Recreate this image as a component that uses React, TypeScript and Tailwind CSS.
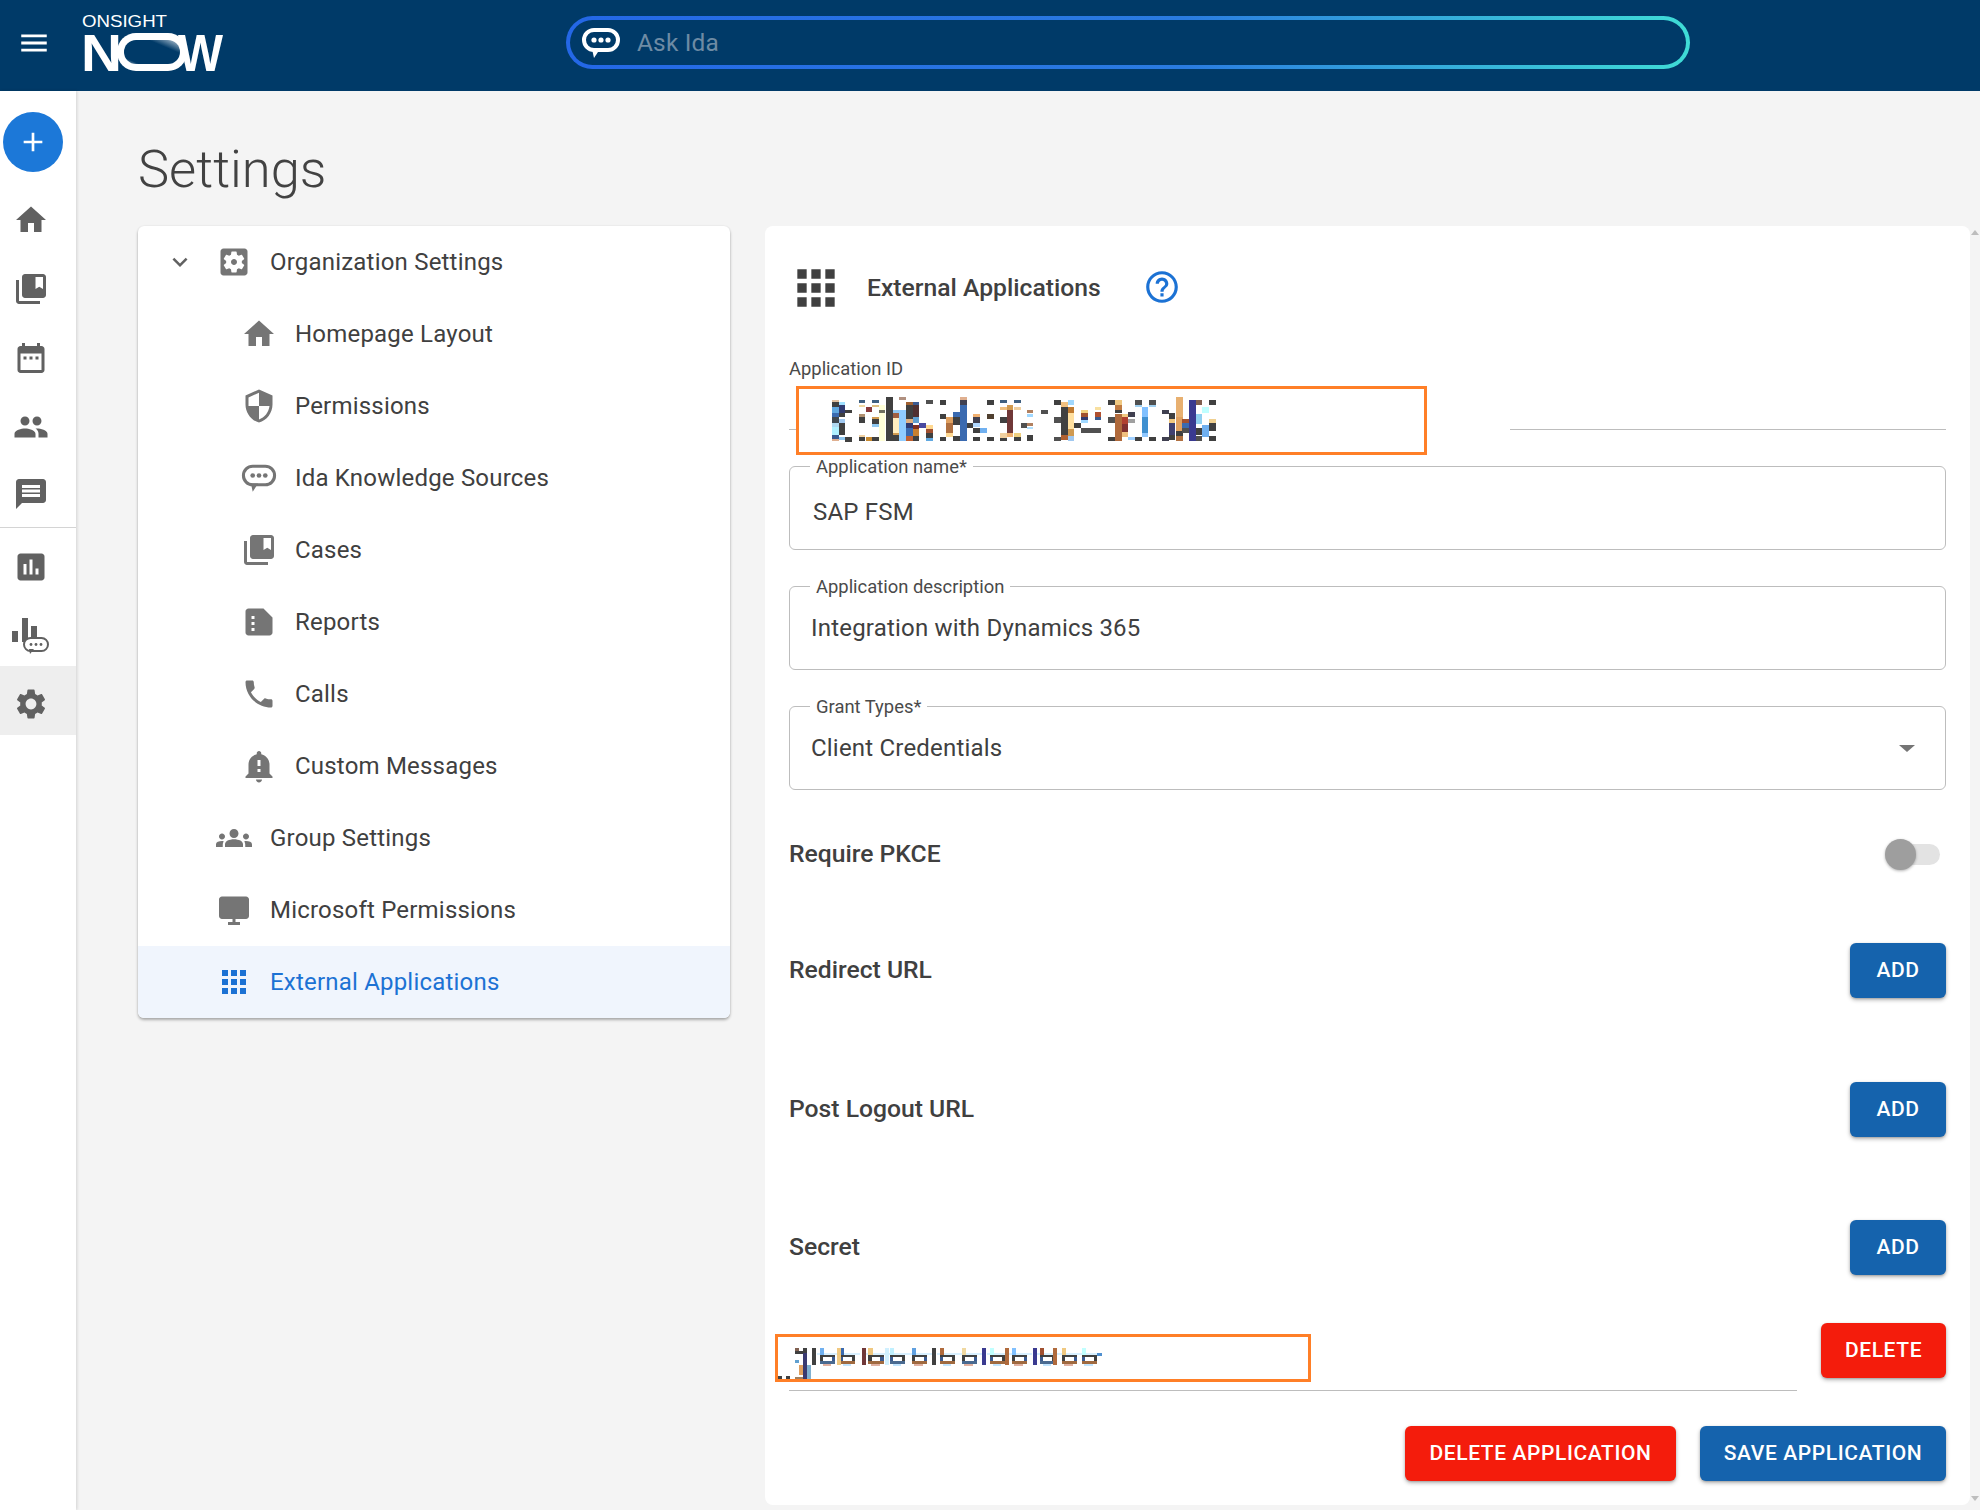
import React from "react";

type R = [number, number, number, number, string];
const D = "#404040", G = "#505050", N = "#303a70", B = "#3a6ab0";

const idA: R[] = [
  [18,24,20,6,"#e0c0a0"],[18,30,20,14,D],[18,44,20,20,"#60a8e0"],[18,64,20,10,B],[18,74,20,20,"#404850"],[18,94,20,10,"#b0d8f0"],[18,104,20,26,"#b0f0ff"],[18,130,20,10,"#3a5a90"],[18,140,20,8,"#e0b090"],
  [38,30,20,10,"#a0e0ff"],[38,40,20,24,N],[38,64,20,10,D],[38,80,20,14,"#a0c8f0"],[38,94,20,36,D],[38,135,20,8,"#90c8f0"],
  [58,54,20,10,D],[58,135,20,14,D],
  [98,24,20,10,"#406080"],[98,38,20,8,"#f0d8a0"],[98,66,20,10,"#b09070"],[98,76,20,18,D],[98,130,20,6,"#f0d0a0"],[98,136,20,12,D],
  [120,44,18,16,"#8a3a3a"],[120,134,18,14,"#c88a30"],
  [138,24,20,10,"#406080"],[138,38,20,8,"#e0c080"],[138,74,20,8,"#d09a50"],[138,82,20,14,D],[138,96,20,10,"#90c8f0"],[138,134,20,14,D],
  [158,38,20,110,"#ffffd8"],[158,54,20,10,"#707060"],
  [180,14,20,134,D],
  [200,54,20,10,"#90c8f0"],[200,64,20,14,"#a06040"],[200,78,20,44,"#ffeec0"],[200,122,20,8,"#d09a50"],[200,130,20,18,D],
  [220,14,20,10,"#b09080"],[220,54,20,94,"#90ccff"],
  [240,30,20,10,"#a06030"],[240,40,20,40,D],[240,80,20,14,"#e0b080"],[240,94,20,14,N],[240,108,20,24,B],[240,132,20,16,"#c06030"],
  [260,30,20,10,"#3a5a90"],[260,40,20,34,"#503030"],[260,74,20,20,"#60a0d0"],[260,98,20,14,"#803020"],[260,112,20,20,"#c88030"],[260,132,20,14,D],
  [280,94,20,14,"#4a4aa0"],
  [300,24,20,12,G],[300,100,20,10,"#ffd890"],[300,110,20,14,"#a05030"],[300,124,20,14,D],[300,138,20,8,"#60a8e0"],
  [342,24,18,14,D],[342,66,18,16,D],[342,134,18,14,D],
  [360,74,20,20,"#e0a060"],[360,94,20,30,"#b07040"],[360,124,20,10,"#ffd890"],
  [380,60,22,14,B],[380,74,22,26,D],[380,132,22,16,D],
  [402,14,22,10,"#e0b090"],[402,24,22,16,"#404050"],[402,40,22,108,B],
  [424,94,18,14,D],
  [442,66,20,8,"#f0b070"],[442,74,20,20,"#404050"],[442,94,20,10,"#b0d8ff"],[442,108,20,14,D],[442,134,20,14,D],
  [462,108,20,14,"#70b0f0"],
  [482,24,22,14,D],[482,66,22,14,"#504030"],[482,134,22,14,D],
  [522,24,20,8,"#406080"],[522,44,20,10,"#f0c080"],[522,74,20,20,D],[522,124,20,14,"#f0d0a0"],[522,138,20,10,D],
  [542,38,20,16,"#d09a50"],[542,54,20,70,"#703838"],[542,124,20,10,"#f0b070"],
  [564,24,20,8,"#406080"],[564,44,20,10,"#f0d0a0"],[564,122,20,14,"#f0d080"],[564,136,20,12,D],
];
const idB: R[] = [
  [20,54,20,8,"#b08060"],[20,66,20,8,"#a0d8ff"],[62,54,22,12,G],[2,94,20,14,G],[20,94,20,8,"#b08060"],[20,104,20,8,"#b0e0ff"],[20,130,20,18,D],
  [102,24,20,14,D],[102,76,20,16,G],[102,134,20,14,G],
  [122,30,22,14,"#f0c080"],[122,44,22,86,D],[122,130,22,14,"#b06030"],
  [144,24,18,14,"#a0d8ff"],[144,44,18,20,"#c07a30"],[144,64,18,48,"#ffe0a0"],[144,112,18,20,"#d09a50"],[144,132,18,16,"#a0c8f0"],
  [162,94,20,14,D],
  [183,54,20,8,"#f0d080"],[183,62,20,12,"#a05030"],[183,74,20,10,N],[183,84,20,10,"#a0d8ff"],[183,108,60,14,G],
  [224,44,20,10,"#f8e0a0"],[224,60,20,16,"#b05030"],[224,76,20,8,"#3a5a90"],
  [264,24,20,14,D],[264,76,20,16,G],[264,134,20,14,D],
  [285,24,20,14,"#f0c880"],[285,38,20,16,"#c07a40"],[285,54,20,10,D],[285,66,20,82,"#b06a3c"],
  [305,66,20,10,"#f0c880"],[305,76,20,20,"#b04030"],[305,96,20,24,"#803030"],[305,120,20,14,"#f0c080"],
  [325,60,20,16,"#404050"],[325,80,20,14,"#a0a0a0"],[325,134,20,10,"#a0d0ff"],
  [345,24,20,14,G],[345,38,20,8,"#a0d0f0"],[345,134,20,14,D],
  [365,44,20,30,"#80c0ff"],[365,74,20,48,"#4090d0"],[365,122,20,12,"#90c8ff"],
  [387,24,20,14,G],[387,38,20,8,"#a0d0f0"],[387,134,20,14,D],
  [426,54,20,12,"#404050"],[426,134,20,14,"#404050"],
  [446,64,20,16,D],[446,80,20,14,"#f0c880"],[446,94,20,36,"#404070"],[446,130,20,14,D],
  [468,14,20,60,"#e8b070"],[468,74,20,44,"#e0a060"],[468,118,20,14,D],[468,132,20,14,"#b07040"],
  [487,80,20,14,"#a05030"],[487,94,20,14,B],[487,108,20,14,G],
  [507,24,20,124,"#3a3a90"],
  [527,24,20,14,"#806050"],[527,66,20,30,"#90d0f0"],[527,108,20,20,D],[527,132,20,14,G],
  [547,44,20,20,"#c0ffff"],[547,98,20,36,"#70b0f0"],
  [567,24,20,14,D],[567,80,20,14,"#f0d090"],[567,94,20,24,D],[567,132,20,14,D],
];

const secretStarts = [135,195,280,345,410,495,560,645,710,795,860,920];
const secretTops = ["#70b0f0","#3a6ab0","#f0c880","#c0f0ff","#60a0e0","#b06a3c","#f0d8a0","#c0ffff","#80c0ff","#a05030","#f0c880","#c0ffff"];
const stems: [number, string][] = [[110,D],[260,"#703838"],[470,D],[620,"#3a3a90"],[775,"#3a3a90"],[185,"#f0c880"],[330,"#d0f0ff"],[690,"#b06a3c"],[835,"#b06a3c"]];

function Mosaic() {
  return (
    <svg width="394" height="56" viewBox="0 0 1182 168" shapeRendering="crispEdges">
      {idA.map((r, i) => <rect key={i} x={r[0]} y={r[1]} width={r[2]} height={r[3]} fill={r[4]} />)}
      <g transform="translate(582 0)">
        {idB.map((r, i) => <rect key={i} x={r[0]} y={r[1]} width={r[2]} height={r[3]} fill={r[4]} />)}
      </g>
    </svg>
  );
}

function SecretMosaic() {
  return (
    <svg width="340" height="45" viewBox="0 0 1020 135" shapeRendering="crispEdges">
      <rect x="60" y="24" width="12" height="8" fill="#806050" />
      <rect x="60" y="34" width="24" height="8" fill={D} />
      <rect x="60" y="60" width="12" height="8" fill="#60a0d0" />
      <rect x="72" y="74" width="12" height="30" fill="#e0a060" />
      <rect x="84" y="24" width="12" height="16" fill={D} />
      <rect x="84" y="40" width="12" height="78" fill="#3a3a70" />
      <rect x="96" y="76" width="12" height="40" fill="#80b0d0" />
      <rect x="8" y="108" width="12" height="8" fill={D} />
      <rect x="32" y="108" width="12" height="8" fill={D} />
      <rect x="60" y="110" width="24" height="8" fill="#a08060" />
      {secretStarts.map((x, i) => (
        <g key={x}>
          <rect x={x - 10} y="40" width="70" height="6" fill="#d8f0ff" />
          <rect x={x} y="24" width="13" height="20" fill={secretTops[i]} />
          <rect x={x} y="44" width="46" height="8" fill={D} />
          <rect x={x} y="52" width="10" height="12" fill={i % 2 ? "#3a5a90" : D} />
          <rect x={x + 36} y="52" width="10" height="12" fill={i % 2 ? D : "#3a5a90"} />
          <rect x={x} y="64" width="46" height="7" fill={i % 3 ? "#a06a40" : "#4a6a90"} />
          <rect x={x + 8} y="71" width="26" height="6" fill={i % 2 ? "#c0e4ff" : "#e0b0a0"} />
        </g>
      ))}
      {stems.map(([x, c]) => <rect key={x} x={x} y="24" width="12" height="50" fill={c} />)}
      <rect x="965" y="40" width="16" height="8" fill="#5090d0" />
    </svg>
  );
}

function Ic({ d, size = 30, className = "" }: { d: string; size?: number; className?: string }) {
  return (
    <svg width={size} height={size} viewBox="0 0 24 24" fill="currentColor" className={className}>
      <path d={d} fillRule="evenodd" />
    </svg>
  );
}

const P = {
  home: "M10 20v-6h4v6h5v-8h3L12 3 2 12h3v8z",
  cases: "M4 6H2v14c0 1.1.9 2 2 2h14v-2H4V6zm16-4H8c-1.1 0-2 .9-2 2v12c0 1.1.9 2 2 2h12c1.1 0 2-.9 2-2V4c0-1.1-.9-2-2-2zm0 10l-2.5-1.5L15 12V4h5v8z",
  calendar: "M19 4h-1V2h-2v2H8V2H6v2H5c-1.1 0-2 .9-2 2v14c0 1.1.9 2 2 2h14c1.1 0 2-.9 2-2V6c0-1.1-.9-2-2-2zm0 16H5V9h14v11zM7 11h2v2H7zm4 0h2v2h-2zm4 0h2v2h-2z",
  people: "M16 11c1.66 0 2.99-1.34 2.99-3S17.66 5 16 5c-1.66 0-3 1.34-3 3s1.34 3 3 3zm-8 0c1.66 0 2.99-1.34 2.99-3S9.66 5 8 5C6.34 5 5 6.34 5 8s1.34 3 3 3zm0 2c-2.33 0-7 1.17-7 3.5V19h14v-2.5c0-2.33-4.67-3.5-7-3.5zm8 0c-.29 0-.62.02-.97.05 1.16.84 1.97 1.97 1.97 3.45V19h6v-2.5c0-2.33-4.67-3.5-7-3.5z",
  message: "M20 2H4c-1.1 0-1.99.9-1.99 2L2 22l4-4h14c1.1 0 2-.9 2-2V4c0-1.1-.9-2-2-2zm-2 12H6v-2h12v2zm0-3H6V9h12v2zm0-3H6V6h12v2z",
  assess: "M19 3H5c-1.1 0-2 .9-2 2v14c0 1.1.9 2 2 2h14c1.1 0 2-.9 2-2V5c0-1.1-.9-2-2-2zM9 17H7v-7h2v7zm4 0h-2V7h2v10zm4 0h-2v-4h2v4z",
  gear: "M19.14 12.94c.04-.3.06-.61.06-.94 0-.32-.02-.64-.07-.94l2.03-1.58c.18-.14.23-.41.12-.61l-1.92-3.32c-.12-.22-.37-.29-.59-.22l-2.39.96c-.5-.38-1.03-.7-1.62-.94l-.36-2.54c-.04-.24-.24-.41-.48-.41h-3.84c-.24 0-.43.17-.47.41l-.36 2.54c-.59.24-1.13.57-1.62.94l-2.39-.96c-.22-.08-.47 0-.59.22L2.74 8.87c-.12.21-.08.47.12.61l2.03 1.58c-.05.3-.09.63-.09.94s.02.64.07.94l-2.03 1.58c-.18.14-.23.41-.12.61l1.92 3.32c.12.22.37.29.59.22l2.39-.96c.5.38 1.03.7 1.62.94l.36 2.54c.05.24.24.41.48.41h3.84c.24 0 .44-.17.47-.41l.36-2.54c.59-.24 1.13-.56 1.62-.94l2.39.96c.22.08.47 0 .59-.22l1.92-3.32c.12-.22.07-.47-.12-.61l-2.01-1.58zM12 15.6c-1.98 0-3.6-1.62-3.6-3.6s1.62-3.6 3.6-3.6 3.6 1.62 3.6 3.6-1.62 3.6-3.6 3.6z",
  orgGear: "M19 3H5c-1.11 0-2 .9-2 2v14c0 1.1.89 2 2 2h14c1.11 0 2-.9 2-2V5c0-1.1-.89-2-2-2zm-1.75 9c0 .23-.02.46-.05.68l1.48 1.16c.13.11.17.3.08.45l-1.4 2.42c-.09.15-.27.21-.43.15l-1.74-.7c-.36.28-.76.51-1.18.69l-.26 1.85c-.03.17-.18.3-.35.3h-2.8c-.17 0-.32-.13-.35-.29l-.26-1.85c-.43-.18-.82-.41-1.18-.69l-1.74.7c-.16.06-.34 0-.43-.15l-1.4-2.42c-.09-.15-.05-.34.08-.45l1.48-1.16c-.03-.23-.05-.46-.05-.69 0-.23.02-.46.05-.68l-1.48-1.16c-.13-.11-.17-.3-.08-.45l1.4-2.42c.09-.15.27-.21.43-.15l1.74.7c.36-.28.76-.51 1.18-.69l.26-1.85c.03-.17.18-.3.35-.3h2.8c.17 0 .32.13.35.29l.26 1.85c.43.18.82.41 1.18.69l1.74-.7c.16-.06.34 0 .43.15l1.4 2.42c.09.15.05.34-.08.45l-1.48 1.16c.03.23.05.46.05.69zM12 10c-1.1 0-2 .9-2 2s.9 2 2 2 2-.9 2-2-.9-2-2-2z",
  shield: "M12 1L3 5v6c0 5.55 3.84 10.74 9 12 5.16-1.26 9-6.45 9-12V5l-9-4zm0 10.99h7c-.53 4.12-3.28 7.79-7 8.94V12H5V6.3l7-3.11v8.8z",
  report: "M5 3h10l6 6v10c0 1.1-.9 2-2 2H5c-1.1 0-2-.9-2-2V5c0-1.1.9-2 2-2zm2 5v2h2V8H7zm0 4v2h2v-2H7zm0 4v2h2v-2H7z",
  phone: "M6.62 10.79c1.44 2.83 3.76 5.14 6.59 6.59l2.2-2.2c.27-.27.67-.36 1.02-.24 1.12.37 2.33.57 3.57.57.55 0 1 .45 1 1V20c0 .55-.45 1-1 1-9.39 0-17-7.61-17-17 0-.55.45-1 1-1h3.5c.55 0 1 .45 1 1 0 1.25.2 2.45.57 3.57.11.35.03.74-.25 1.02l-2.2 2.2z",
  bell: "M12 23c1.1 0 1.99-.89 1.99-1.99h-3.98c0 1.1.89 1.99 1.99 1.99zm7-6v-6c0-3.35-2.36-6.15-5.5-6.83V3.5c0-.83-.67-1.5-1.5-1.5s-1.5.67-1.5 1.5v.67C7.36 4.85 5 7.65 5 11v6l-2 2v1h18v-1l-2-2zm-6-1h-2v-2h2v2zm0-4h-2V8h2v4z",
  groups: "M12 12.75c1.63 0 3.07.39 4.24.9 1.08.48 1.76 1.56 1.76 2.73V18H6v-1.61c0-1.18.68-2.26 1.76-2.73 1.17-.52 2.61-.91 4.24-.91zM4 13c1.1 0 2-.9 2-2s-.9-2-2-2-2 .9-2 2 .9 2 2 2zm1.13 1.1c-.37-.06-.74-.1-1.13-.1-.99 0-1.93.21-2.78.58C.48 14.9 0 15.62 0 16.43V18h4.5v-1.61c0-.83.23-1.61.63-2.29zM20 13c1.1 0 2-.9 2-2s-.9-2-2-2-2 .9-2 2 .9 2 2 2zm4 3.43c0-.81-.48-1.53-1.22-1.85-.85-.37-1.79-.58-2.78-.58-.39 0-.76.04-1.13.1.4.68.63 1.46.63 2.29V18H24v-1.57zM12 6c1.66 0 3 1.34 3 3s-1.34 3-3 3-3-1.34-3-3 1.34-3 3-3z",
  monitor: "M20 3H4c-1.1 0-2 .9-2 2v11c0 1.1.9 2 2 2h7v2H8v2h8v-2h-3v-2h7c1.1 0 2-.9 2-2V5c0-1.1-.9-2-2-2z",
  apps: "M4 8h4V4H4v4zm6 12h4v-4h-4v4zm-6 0h4v-4H4v4zm0-6h4v-4H4v4zm6 0h4v-4h-4v4zm6-10v4h4V4h-4zm-6 4h4V4h-4v4zm6 6h4v-4h-4v4zm0 6h4v-4h-4v4z",
  chevron: "M16.59 8.59L12 13.17 7.41 8.59 6 10l6 6 6-6z",
  help: "M11 18h2v-2h-2v2zm1-16C6.48 2 2 6.48 2 12s4.48 10 10 10 10-4.48 10-10S17.52 2 12 2zm0 18c-4.41 0-8-3.59-8-8s3.59-8 8-8 8 3.59 8 8-3.59 8-8 8zm0-14c-2.21 0-4 1.79-4 4h2c0-1.1.9-2 2-2s2 .9 2 2c0 2-3 1.75-3 5h2c0-2.25 3-2.5 3-5 0-2.21-1.79-4-4-4z",
  plus: "M19 13h-6v6h-2v-6H5v-2h6V5h2v6h6v2z",
  menu: "M3 18h18v-2H3v2zm0-5h18v-2H3v2zm0-7v2h18V6H3z",
};

function ChatPill({ width, weight, color = "currentColor" }: { width: number; weight: number; color?: string }) {
  return (
    <svg width={width} height={width * 0.8} viewBox="0 0 40 32" fill="none">
      <rect x={weight / 2 + 1} y={weight / 2 + 1} width={38 - weight} height={24 - weight} rx={(24 - weight) / 2} stroke={color} strokeWidth={weight} />
      <path d="M11 22h8l-6 9z" fill={color} />
      <circle cx="13" cy="13" r="2.6" fill={color} />
      <circle cx="20" cy="13" r="2.6" fill={color} />
      <circle cx="27" cy="13" r="2.6" fill={color} />
    </svg>
  );
}

function BarsChat() {
  return (
    <svg width="38" height="40" viewBox="0 0 38 40" fill="#616161">
      <rect x="0" y="15" width="6" height="11" />
      <rect x="10" y="2" width="6" height="24" />
      <rect x="19" y="10" width="6" height="11" />
      <rect x="12" y="22" width="24" height="13" rx="6.5" fill="#fff" stroke="#616161" strokeWidth="2" />
      <path d="M17 33h5l-4 5z" />
      <circle cx="19" cy="28.5" r="1.4" />
      <circle cx="24" cy="28.5" r="1.4" />
      <circle cx="29" cy="28.5" r="1.4" />
    </svg>
  );
}

function Logo() {
  return (
    <svg width="146" height="91" viewBox="0 0 146 91" fill="#fff" className="ml-[31px] shrink-0">
      <defs>
        <linearGradient id="hole" x1="0" y1="1" x2="1" y2="0">
          <stop offset="0" stopColor="#b8c8d6" />
          <stop offset="0.14" stopColor="#003a68" />
          <stop offset="0.72" stopColor="#003a68" />
          <stop offset="1" stopColor="#c2d0dc" />
        </linearGradient>
      </defs>
      <text x="0" y="27" fontFamily="'Liberation Sans',sans-serif" fontSize="16.5" textLength="85" lengthAdjust="spacingAndGlyphs">ONSIGHT</text>
      <rect x="35" y="33" width="70" height="38" rx="19" fill="#fff" />
      <rect x="42" y="40" width="56" height="24" rx="12" fill="url(#hole)" />
      <text x="-1" y="71" fontFamily="'Liberation Sans',sans-serif" fontWeight="700" fontSize="52" textLength="41" lengthAdjust="spacingAndGlyphs">N</text>
      <text x="96" y="71" fontFamily="'Liberation Sans',sans-serif" fontWeight="700" fontSize="52" textLength="45" lengthAdjust="spacingAndGlyphs">W</text>
    </svg>
  );
}

const railRows: { h: string; node: React.ReactNode }[] = [
  { h: "h-[69px]", node: <Ic d={P.home} size={36} /> },
  { h: "h-[69px]", node: <Ic d={P.cases} size={36} /> },
  { h: "h-[69px]", node: <Ic d={P.calendar} size={36} /> },
  { h: "h-[69px]", node: <Ic d={P.people} size={36} /> },
  { h: "h-[66px]", node: <Ic d={P.message} size={36} /> },
];

const menu: { label: string; d?: string; level: 1 | 2; chat?: boolean; chevron?: boolean; active?: boolean }[] = [
  { label: "Organization Settings", d: P.orgGear, level: 1, chevron: true },
  { label: "Homepage Layout", d: P.home, level: 2 },
  { label: "Permissions", d: P.shield, level: 2 },
  { label: "Ida Knowledge Sources", level: 2, chat: true },
  { label: "Cases", d: P.cases, level: 2 },
  { label: "Reports", d: P.report, level: 2 },
  { label: "Calls", d: P.phone, level: 2 },
  { label: "Custom Messages", d: P.bell, level: 2 },
  { label: "Group Settings", d: P.groups, level: 1 },
  { label: "Microsoft Permissions", d: P.monitor, level: 1 },
  { label: "External Applications", d: P.apps, level: 1, active: true },
];

function Field({ label, value, indent = "pl-[21px]", arrow, valueClass = "pb-[1px]" }: { label: string; value: string; indent?: string; arrow?: boolean; valueClass?: string }) {
  return (
    <div className={`relative flex h-[84px] items-center rounded-[6px] border border-[#bdbdbd] ${indent} pr-[30px]`}>
      <span className="absolute -top-[11px] left-[20px] bg-white px-[6px] text-[18.4px] leading-[22px] text-[#4a4a4a]">{label}</span>
      <span className={`flex-1 text-[24px] tracking-[0.2px] text-[#404040] ${valueClass}`}>{value}</span>
      {arrow && <span className="h-0 w-0 border-x-[8px] border-t-[7px] border-x-transparent border-t-[#757575]" />}
    </div>
  );
}

function Btn({ children, red, className = "" }: { children: React.ReactNode; red?: boolean; className?: string }) {
  return (
    <button className={`flex h-[55px] items-center justify-center rounded-[6px] text-[21px] font-medium tracking-[0.6px] text-white shadow-[0_2px_4px_rgba(0,0,0,0.28),0_1px_2px_rgba(0,0,0,0.16)] ${red ? "bg-[#f41c0c]" : "bg-[#1563ad]"} ${className}`}>
      {children}
    </button>
  );
}

function Row({ label, className = "" }: { label: string; className?: string }) {
  return (
    <div className={`flex h-[55px] items-center justify-between ${className}`}>
      <span className="pb-[2px] text-[24.7px] font-medium text-[#404040]">{label}</span>
      <Btn className="w-[96px]">ADD</Btn>
    </div>
  );
}

export default function App() {
  return (
    <div className="flex h-[1510px] w-[1980px] flex-col overflow-hidden bg-[#f4f4f4] font-[Roboto,sans-serif] text-[#404040]">
      <header className="flex h-[91px] shrink-0 items-start bg-[#003a68]">
        <Ic d={P.menu} size={34} className="ml-[17px] mt-[26px] shrink-0 text-white" />
        <Logo />
        <div className="ml-[338px] mt-[16px] h-[53px] w-[1124px] rounded-full bg-[linear-gradient(90deg,#2467e6_0%,#2a7be0_55%,#3fdcd6_100%)] p-[4px]">
          <div className="flex h-full items-center rounded-full bg-[#003a68] pl-[11px]">
            <ChatPill width={40} weight={4} color="#fff" />
            <span className="ml-[16px] pt-[2px] text-[24.4px] tracking-[0.2px] text-[#6e8ba4]">Ask Ida</span>
          </div>
        </div>
      </header>

      <div className="flex min-h-0 flex-1">
        <aside className="z-10 flex w-[76px] shrink-0 flex-col bg-white text-[#616161] shadow-[1px_0_3px_rgba(0,0,0,0.14)]">
          <button className="mx-[3px] mt-[21px] flex h-[60px] w-[60px] shrink-0 items-center justify-center rounded-full bg-[#1c78d8] text-white">
            <Ic d={P.plus} size={32} />
          </button>
          <div className="mt-[13px]">
            {railRows.map((r, i) => (
              <div key={i} className={`flex items-center pl-[13px] ${r.h}`}>{r.node}</div>
            ))}
          </div>
          <div className="h-px bg-[#d4d4d4]" />
          <div className="flex h-[78px] items-center pl-[13px]"><Ic d={P.assess} size={36} /></div>
          <div className="flex h-[60px] items-center pl-[12px]"><BarsChat /></div>
          <div className="flex h-[69px] items-center bg-[#eeeeee] pl-[13px] pt-[7px]"><Ic d={P.gear} size={36} /></div>
        </aside>

        <main className="relative flex min-w-0 flex-1 flex-col pl-[62px] pr-[10px]">
          <h1 className="h-[135px] pt-[44px] text-[52.5px] font-light leading-[68px] text-[#424242]">Settings</h1>
          <div className="flex items-start gap-[35px]">
            <nav className="w-[592px] shrink-0 overflow-hidden rounded-[6px] bg-white shadow-[0_2px_3px_rgba(0,0,0,0.3),0_0_2px_rgba(0,0,0,0.08)]">
              {menu.map((m) => (
                <div key={m.label} className={`flex h-[72px] items-center ${m.active ? "bg-[#f0f5fd] text-[#1c72d4]" : ""} ${m.level === 2 ? "pl-[103px]" : m.chevron ? "pl-[27px]" : "pl-[78px]"}`}>
                  {m.chevron && <Ic d={P.chevron} size={30} className="mr-[21px] shrink-0 text-[#616161]" />}
                  <span className={`flex w-[36px] shrink-0 items-center justify-center ${m.active ? "text-[#1c72d4]" : "text-[#757575]"}`}>
                    {m.chat ? <ChatPill width={38} weight={3.4} /> : <Ic d={m.d as string} size={36} />}
                  </span>
                  <span className="ml-[18px] text-[24px] tracking-[0.2px]">{m.label}</span>
                </div>
              ))}
            </nav>

            <section className="flex h-[1279px] min-w-0 flex-1 flex-col rounded-[8px] bg-white px-[24px] pt-[38px]">
              <div className="flex h-[48px] shrink-0 items-center">
                <Ic d={P.apps} size={56} className="-ml-[1px] shrink-0 text-[#404040]" />
                <span className="ml-[23px] text-[24.7px] font-medium text-[#404040]">External Applications</span>
                <Ic d={P.help} size={38} className="ml-[42px] -translate-y-[1px] text-[#1c72d4]" />
              </div>

              <div className="relative mt-[46px] h-[72px] shrink-0 border-b border-[#bdbdbd]">
                <span className="block text-[18.4px] leading-[22px] text-[#4a4a4a]">Application ID</span>
                <div className="absolute left-[7px] top-[28px] flex w-[714px] bg-white">
                  <div className="relative h-[69px] w-[631px] border-[3px] border-[#ff7f27] bg-white">
                    <div className="absolute left-[27px] top-[3px]"><Mosaic /></div>
                  </div>
                </div>
              </div>

              <div className="mt-[36px] shrink-0"><Field label="Application name*" value="SAP FSM" indent="pl-[23px]" valueClass="pt-[7px]" /></div>
              <div className="mt-[36px] shrink-0"><Field label="Application description" value="Integration with Dynamics 365" /></div>
              <div className="mt-[36px] shrink-0"><Field label="Grant Types*" value="Client Credentials" arrow /></div>

              <div className="mt-[45px] flex h-[40px] shrink-0 items-center justify-between">
                <span className="pb-[2px] text-[24.7px] font-medium text-[#404040]">Require PKCE</span>
                <span className="relative mr-[6px] -mt-[1px] h-[21px] w-[52px] rounded-full bg-[#e3e3e3]">
                  <span className="absolute -top-[5px] left-[-3px] h-[31px] w-[31px] rounded-full bg-[#9e9e9e] shadow-[0_1px_3px_rgba(0,0,0,0.3)]" />
                </span>
              </div>

              <Row label="Redirect URL" className="mt-[68px] shrink-0" />
              <Row label="Post Logout URL" className="mt-[84px] shrink-0" />
              <Row label="Secret" className="mt-[83px] shrink-0" />

              <div className="relative mt-[48px] flex shrink-0 items-start gap-[24px]">
                <div className="h-[68px] flex-1 border-b border-[#bdbdbd]" />
                <Btn red className="w-[125px]">DELETE</Btn>
                <div className="absolute -left-[14px] top-[11px] h-[48px] w-[536px] border-[3px] border-[#ff7f27] bg-white">
                  <div className="absolute -left-[3px] top-[3px]"><SecretMosaic /></div>
                </div>
              </div>

              <div className="mt-[35px] flex shrink-0 justify-end gap-[24px]">
                <Btn red className="w-[271px]">DELETE APPLICATION</Btn>
                <Btn className="w-[246px]">SAVE APPLICATION</Btn>
              </div>
            </section>
          </div>
          <span className="absolute right-[1px] top-[139px] h-0 w-0 border-x-[4px] border-b-[5px] border-x-transparent border-b-[#bdbdbd]" />
          <span className="absolute bottom-[9px] right-[1px] h-0 w-0 border-x-[4px] border-t-[5px] border-x-transparent border-t-[#bdbdbd]" />
        </main>
      </div>
    </div>
  );
}
